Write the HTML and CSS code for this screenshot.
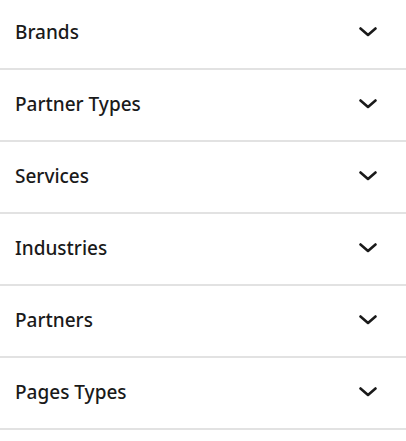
FILE: index.html
```html
<!DOCTYPE html>
<html>
<head>
<meta charset="utf-8">
<link rel="stylesheet" href="styles.css">
</head>
<body>
<div class="accordion">
  <div class="item"><span class="label">Brands</span><svg class="chev" viewBox="0 0 18 10" width="18" height="10"><path d="M1.5 1.5 L9 8 L16.5 1.5" /></svg></div>
  <div class="item"><span class="label">Partner Types</span><svg class="chev" viewBox="0 0 18 10" width="18" height="10"><path d="M1.5 1.5 L9 8 L16.5 1.5" /></svg></div>
  <div class="item"><span class="label">Services</span><svg class="chev" viewBox="0 0 18 10" width="18" height="10"><path d="M1.5 1.5 L9 8 L16.5 1.5" /></svg></div>
  <div class="item"><span class="label">Industries</span><svg class="chev" viewBox="0 0 18 10" width="18" height="10"><path d="M1.5 1.5 L9 8 L16.5 1.5" /></svg></div>
  <div class="item"><span class="label">Partners</span><svg class="chev" viewBox="0 0 18 10" width="18" height="10"><path d="M1.5 1.5 L9 8 L16.5 1.5" /></svg></div>
  <div class="item"><span class="label">Pages Types</span><svg class="chev" viewBox="0 0 18 10" width="18" height="10"><path d="M1.5 1.5 L9 8 L16.5 1.5" /></svg></div>
</div>
</body>
</html>
```
FILE: styles.css
```css
html, body {
  margin: 0;
  padding: 0;
  background: #ffffff;
}
.accordion {
  display: flex;
  flex-direction: column;
  margin-top: -2px;
}
.item {
  box-sizing: border-box;
  display: flex;
  align-items: center;
  justify-content: space-between;
  height: 72px;
  padding: 0 29px 2px 15px;
  border-bottom: 2px solid #e2e2e2;
  font-family: "Noto Sans", sans-serif;
  font-weight: 500;
  font-size: 19px;
  color: #1a1a1a;
}
.chev {
  display: block;
  fill: none;
  stroke: #1a1a1a;
  stroke-width: 2.6;
  stroke-linecap: round;
  stroke-linejoin: round;
}
```
